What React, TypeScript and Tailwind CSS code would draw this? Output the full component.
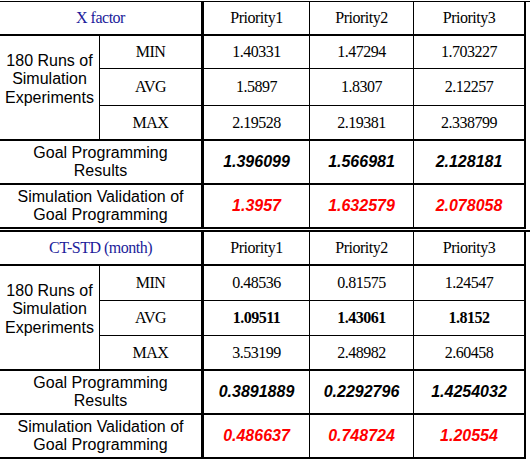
import React from 'react';

type Block = {
  title: string;
  rows: { label: string; values: string[]; bold?: boolean }[];
  goal: string[];
  sim: string[];
  heights: string[];
};

const blocks: Block[] = [
  {
    title: 'X factor',
    rows: [
      { label: 'MIN', values: ['1.40331', '1.47294', '1.703227'] },
      { label: 'AVG', values: ['1.5897', '1.8307', '2.12257'] },
      { label: 'MAX', values: ['2.19528', '2.19381', '2.338799'] },
    ],
    goal: ['1.396099', '1.566981', '2.128181'],
    sim: ['1.3957', '1.632579', '2.078058'],
    heights: ['h-[33px]', 'h-[37px]', 'h-[35px]'],
  },
  {
    title: 'CT-STD (month)',
    rows: [
      { label: 'MIN', values: ['0.48536', '0.81575', '1.24547'] },
      { label: 'AVG', values: ['1.09511', '1.43061', '1.8152'], bold: true },
      { label: 'MAX', values: ['3.53199', '2.48982', '2.60458'] },
    ],
    goal: ['0.3891889', '0.2292796', '1.4254032'],
    sim: ['0.486637', '0.748724', '1.20554'],
    heights: ['h-[35px]', 'h-[35px]', 'h-[35px]'],
  },
];

const serif = "font-['Liberation_Serif',serif] text-[16px] tracking-[-0.5px]";
const sans = "font-['Liberation_Sans',Arial,sans-serif] text-[16px] leading-[18.5px]";
const valBorders = ['border-r', 'border-r', 'border-r-2'];

function Table({ block, top }: { block: Block; top: string }) {
  return (
    <div className={`grid grid-cols-[100px_104px_106px_104px_112px] border-black ${top}`}>
      {/* header row */}
      <div
        className={`col-span-2 h-[34px] flex items-center justify-center border-b-2 border-r-[3px] border-black text-[#1c1c9a] ${serif}`}
      >
        {block.title}
      </div>
      {['Priority1', 'Priority2', 'Priority3'].map((p, i) => (
        <div
          key={p}
          className={`h-[34px] flex items-center justify-center border-b-2 border-black text-black ${valBorders[i]} ${serif}`}
        >
          {p}
        </div>
      ))}

      {/* simulation runs */}
      <div
        className={`row-span-3 flex items-center justify-center text-center pb-[16px] border-r border-b-2 border-black text-black ${sans}`}
      >
        180 Runs of
        <br />
        Simulation
        <br />
        Experiments
      </div>
      {block.rows.map((r, ri) => {
        const bb = ri === 2 ? 'border-b-2' : 'border-b';
        const h = block.heights[ri];
        return (
          <React.Fragment key={r.label}>
            <div
              className={`${h} flex items-center justify-center border-r-[3px] border-black text-black ${bb} ${serif}`}
            >
              {r.label}
            </div>
            {r.values.map((v, i) => (
              <div
                key={i}
                className={`${h} flex items-center justify-center border-black text-black ${bb} ${valBorders[i]} ${serif} ${
                  r.bold ? 'font-bold' : ''
                }`}
              >
                {v}
              </div>
            ))}
          </React.Fragment>
        );
      })}

      {/* goal programming */}
      <div
        className={`col-span-2 h-[44px] flex items-center justify-center text-center border-b-2 border-r-[3px] border-black text-black ${sans}`}
      >
        Goal Programming
        <br />
        Results
      </div>
      {block.goal.map((v, i) => (
        <div
          key={i}
          className={`h-[44px] flex items-center justify-center border-b-2 border-black text-black font-bold italic ${valBorders[i]} ${sans}`}
        >
          {v}
        </div>
      ))}

      {/* validation */}
      <div
        className={`col-span-2 h-[44px] flex items-center justify-center text-center border-b-2 border-r-[3px] border-black text-black ${sans}`}
      >
        Simulation Validation of
        <br />
        Goal Programming
      </div>
      {block.sim.map((v, i) => (
        <div
          key={i}
          className={`h-[44px] flex items-center justify-center border-b-2 border-black text-[#ff0000] font-bold italic ${valBorders[i]} ${sans}`}
        >
          {v}
        </div>
      ))}
    </div>
  );
}

export default function App() {
  return (
    <div className="w-[530px] h-[466px] bg-white overflow-hidden">
      <div className="pt-px">
        <Table block={blocks[0]} top="border-t" />
        <Table block={blocks[1]} top="mt-px border-t-2" />
      </div>
    </div>
  );
}
